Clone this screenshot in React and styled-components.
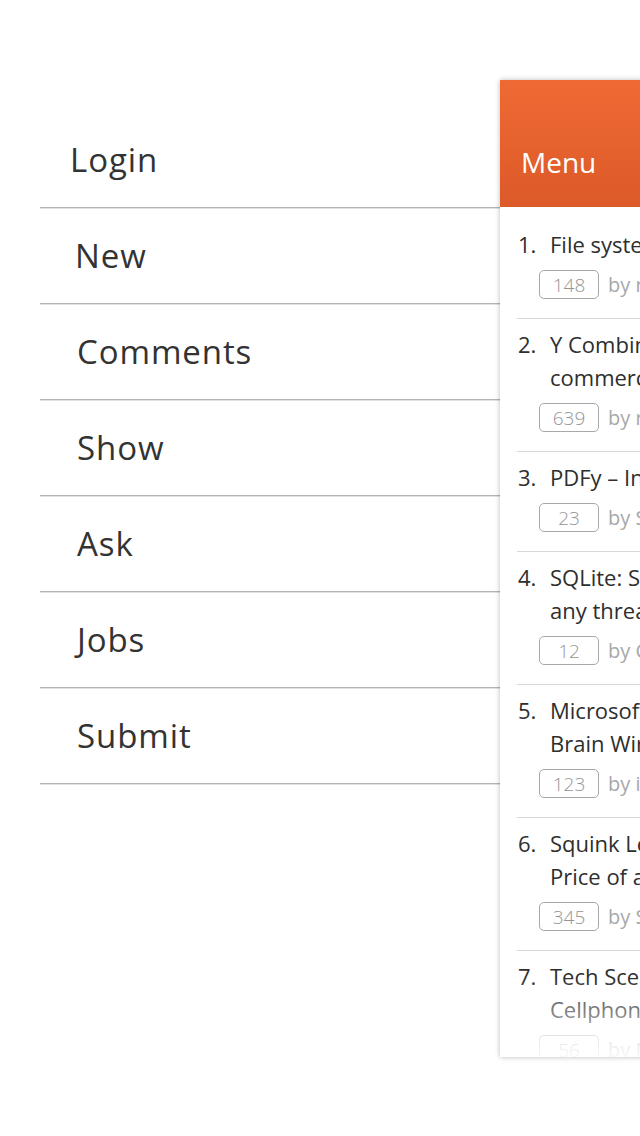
import React from "react";
import styled, { createGlobalStyle } from "styled-components";

const Global = createGlobalStyle`
  html, body { margin: 0; padding: 0; background: #fff; }
  body {
    width: 640px;
    height: 1136px;
    overflow: hidden;
    font-family: "Open Sans", "Noto Sans", sans-serif;
    -webkit-font-smoothing: antialiased;
  }
`;

const Screen = styled.div`
  display: flex;
  align-items: flex-start;
  width: 640px;
  height: 1136px;
  overflow: hidden;
`;

const SideMenu = styled.nav`
  flex: 0 0 460px;
  margin: 112px 0 0 40px;
  display: flex;
  flex-direction: column;
`;

const MenuRow = styled.div`
  height: 95px;
  display: flex;
  align-items: center;
  padding-left: ${(p) => p.$indent}px;
  border-bottom: 1px solid #b4b4b4;
  box-shadow: 0 1px 0 #e2e2e2;
  font-size: 33px;
  color: #333;
  letter-spacing: 0.9px;
`;

const Panel = styled.section`
  position: relative;
  flex: 0 0 460px;
  margin-top: 80px;
  height: 977px;
  background: #fff;
  box-shadow: 0 0 5px rgba(0, 0, 0, 0.28);
  display: flex;
  flex-direction: column;
  overflow: hidden;
`;

const Header = styled.header`
  height: 127px;
  flex: 0 0 127px;
  background: linear-gradient(#ef6933, #dc5a29);
  display: flex;
  align-items: flex-end;
  padding: 0 0 26px 21px;
  box-sizing: border-box;
  color: #fff;
  font-size: 28px;
  font-weight: 400;
`;

const List = styled.ol`
  list-style: none;
  margin: 0;
  padding: 12px 0 0 17px;
  position: relative;
  flex: 1;
  overflow: hidden;

  &::after {
    content: "";
    position: absolute;
    left: 0;
    right: 0;
    bottom: 0;
    height: 80px;
    background: linear-gradient(rgba(255, 255, 255, 0), rgba(255, 255, 255, 0.92));
    pointer-events: none;
  }
`;

const Item = styled.li`
  padding: 9px 0 19px 1px;
  border-top: ${(p) => (p.$first ? "none" : "1px solid #d8d8d8")};
`;

const TitleRow = styled.div`
  display: flex;
  font-size: 22px;
  line-height: 33px;
  color: #2e2e2e;
  white-space: nowrap;
`;

const Num = styled.span`
  flex: 0 0 32px;
`;

const Lines = styled.span`
  display: flex;
  flex-direction: column;
`;

const Meta = styled.div`
  display: flex;
  align-items: center;
  gap: 9px;
  margin-top: 9px;
  padding-left: 21px;
  white-space: nowrap;
`;

const Badge = styled.span`
  width: 60px;
  height: 29px;
  box-sizing: border-box;
  border: 1px solid #a8a8a8;
  border-radius: 5px;
  display: flex;
  align-items: center;
  justify-content: center;
  font-size: 19px;
  font-weight: 300;
  color: #959595;
`;

const By = styled.span`
  font-size: 20px;
  color: #a8a8a8;
`;

const menu = [
  { label: "Login", indent: 30 },
  { label: "New", indent: 35 },
  { label: "Comments", indent: 37 },
  { label: "Show", indent: 37 },
  { label: "Ask", indent: 37 },
  { label: "Jobs", indent: 37 },
  { label: "Submit", indent: 37 },
];

const stories = [
  { n: 1, lines: ["File systems, Data Loss and ZFS"], points: 148, by: "rbanffy" },
  { n: 2, lines: ["Y Combinator Demo Day and the", "commercial web"], points: 639, by: "rdl" },
  { n: 3, lines: ["PDFy – Instant PDF hosting"], points: 23, by: "SeppoErviala" },
  { n: 4, lines: ["SQLite: Safe to share connections across", "any thread"], points: 12, by: "Cieplak" },
  { n: 5, lines: ["Microsoft Research is mapping the", "Brain Wiring of flies"], points: 123, by: "ivank" },
  { n: 6, lines: ["Squink Lets You Print a Circuit Board for the", "Price of a Cup of Coffee"], points: 345, by: "Sunshineleaf" },
  { n: 7, lines: ["Tech Scene: The Hidden Cost of", "Cellphone Contracts"], points: 56, by: "Nizumzen" },
];

export default function App() {
  return (
    <>
      <Global />
      <Screen>
        <SideMenu>
          {menu.map((m) => (
            <MenuRow key={m.label} $indent={m.indent}>
              {m.label}
            </MenuRow>
          ))}
        </SideMenu>
        <Panel>
          <Header>Menu</Header>
          <List>
            {stories.map((s, i) => (
              <Item key={s.n} $first={i === 0}>
                <TitleRow>
                  <Num>{s.n}.</Num>
                  <Lines>
                    {s.lines.map((l) => (
                      <span key={l}>{l}</span>
                    ))}
                  </Lines>
                </TitleRow>
                <Meta>
                  <Badge>{s.points}</Badge>
                  <By>by {s.by}</By>
                </Meta>
              </Item>
            ))}
          </List>
        </Panel>
      </Screen>
    </>
  );
}
